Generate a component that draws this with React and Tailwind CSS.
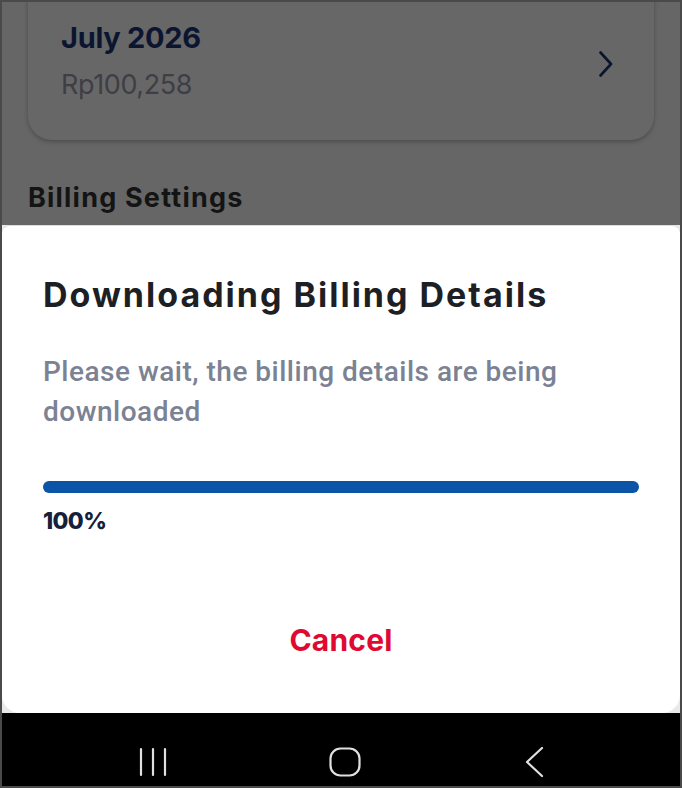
export default function App() {
  return (
    <div className="w-[682px] h-[788px] border-2 border-[#4a4a4a] bg-[#666666] flex flex-col overflow-hidden font-['Inter',sans-serif]">
      {/* Dimmed page behind the sheet */}
      <div className="h-[223px] px-[26px] flex flex-col">
        <div className="-mt-[40px] h-[178px] rounded-[24px] bg-[#676767] shadow-[0_2px_4px_rgba(0,0,0,0.25)] pl-[33px] pr-[41px] pt-[58px] flex items-start justify-between">
          <div>
            <div className="text-[29px] font-bold tracking-[-0.3px] text-[#0c1530] leading-[36px]">July 2026</div>
            <div className="mt-[12px] text-[27px] text-[#3e3e44] leading-[34px] tracking-[-0.4px]">Rp100,258</div>
          </div>
          <svg width="14" height="26" viewBox="0 0 14 26" className="mt-[31px]" fill="none">
            <path d="M1.5 1.5l10.5 11.5L1.5 24.5" stroke="#0c1530" strokeWidth="2.6" strokeLinecap="round" strokeLinejoin="round" />
          </svg>
        </div>
        <div className="mt-[41px] text-[27px] font-bold tracking-[1.2px] text-[#141414] leading-[34px]">Billing Settings</div>
      </div>

      {/* Bottom sheet */}
      <div className="h-[488px] bg-[#e9e9e9]">
        <div className="h-full bg-white rounded-t-[8px] rounded-b-[18px] border-t border-[#dcdcdc] px-[41px] flex flex-col">
          <h1 className="mt-[47px] text-[34px] font-bold tracking-[2px] text-[#1d1f24] leading-[44px] whitespace-nowrap">Downloading Billing Details</h1>
          <p className="mt-[35px] font-['Roboto',sans-serif] font-medium text-[28px] leading-[40px] tracking-[0.5px] text-[#7b8293]">
            Please wait, the billing details are being downloaded
          </p>
          <div className="mt-[49px] h-[12px] rounded-full bg-[#0b54a8]" />
          <div className="mt-[13px] text-[23px] font-extrabold text-[#15203a] leading-[30px] tracking-[-0.6px]">100%</div>
          <div className="mt-[86px] text-center text-[30px] font-bold text-[#de0a32] leading-[36px] tracking-[0.2px]">Cancel</div>
        </div>
      </div>

      {/* Navigation bar */}
      <div className="flex-1 bg-black flex items-center pt-[24px] pl-[136px]">
        <svg width="30" height="30" viewBox="0 0 30 30" fill="none">
          <path d="M3 2v26M15 2v26M27 2v26" stroke="#e0e0e0" strokeWidth="2.2" strokeLinecap="round" />
        </svg>
        <svg width="32" height="30" viewBox="0 0 32 30" fill="none" className="ml-[161px]">
          <rect x="1.5" y="1.5" width="29" height="27" rx="10" stroke="#e0e0e0" strokeWidth="2.2" />
        </svg>
        <svg width="22" height="32" viewBox="0 0 22 32" fill="none" className="ml-[162px]">
          <path d="M19 2L4 16l15 14" stroke="#e0e0e0" strokeWidth="2.2" strokeLinecap="round" strokeLinejoin="round" />
        </svg>
      </div>
    </div>
  );
}
